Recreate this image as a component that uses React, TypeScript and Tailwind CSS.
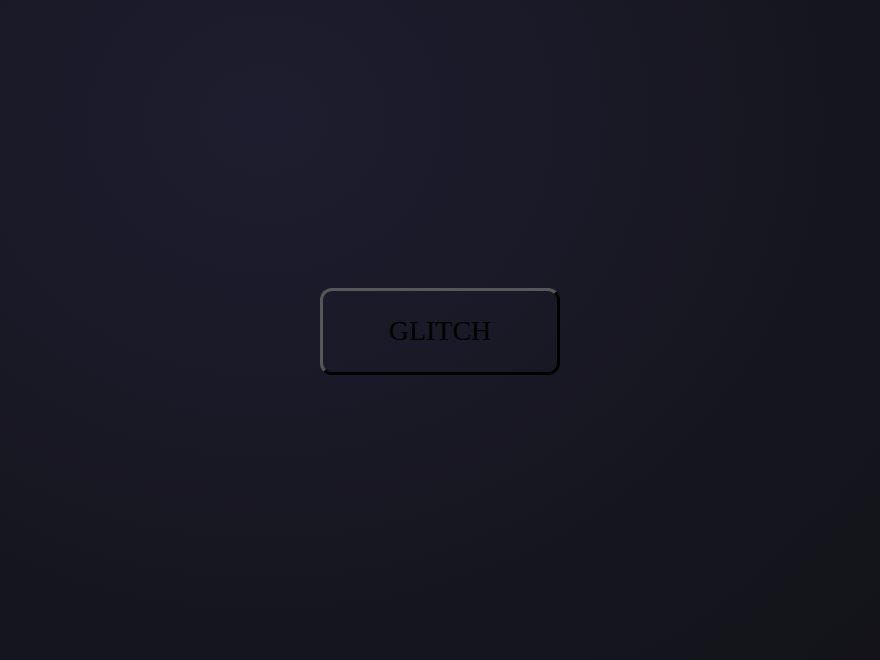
export default function App() {
  return (
    <div className="flex h-[660px] w-full items-center justify-center bg-[radial-gradient(ellipse_at_30%_18%,#1e1d2f_0%,#1a1927_35%,#15151e_70%,#131319_100%)]">
      <button
        type="button"
        className="mt-[2px] h-[87px] w-[240px] rounded-[12px] border-[3px] border-t-[#575757] border-l-[#575757] border-r-black border-b-black bg-transparent font-['Liberation_Serif',serif] text-[28px] text-black"
      >
        GLITCH
      </button>
    </div>
  );
}
